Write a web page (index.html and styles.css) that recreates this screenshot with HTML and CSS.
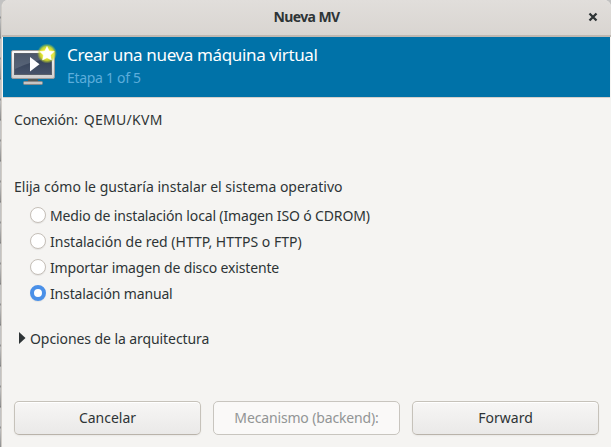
FILE: index.html
```html
<!DOCTYPE html>
<html lang="es">
<head>
<meta charset="utf-8">
<title>Nueva MV</title>
<link rel="stylesheet" href="styles.css">
</head>
<body>
<main class="window">
  <header class="titlebar">
    <h1>Nueva MV</h1>
    <button class="close" aria-label="Cerrar"><svg width="10" height="10" viewBox="0 0 10 10"><path d="M1.5 1.5 8.500 8.500M8.500 1.5 1.5 8.500" stroke="#2e3436" stroke-width="2.3"/></svg></button>
  </header>
  <section class="banner">
    <svg class="monitor" width="48" height="48" viewBox="0 0 48 48">
      <defs>
        <linearGradient id="screen" x2="0" y2="1"><stop stop-color="#2f3b50"/><stop offset="1" stop-color="#46536a"/></linearGradient>
        <linearGradient id="frame" x2="0" y2="1"><stop stop-color="#fafafa"/><stop offset="1" stop-color="#cfcfcf"/></linearGradient>
        <radialGradient id="glow"><stop offset=".4" stop-color="#f6f32a"/><stop offset=".7" stop-color="#dce22a" stop-opacity=".85"/><stop offset="1" stop-color="#b6d52a" stop-opacity="0"/></radialGradient>
      </defs>
      <path d="M19 37h10v5H19z" fill="#555957"/>
      <rect x="14.500" y="40.500" width="19" height="3" rx="1" fill="#c5c5c5" stroke="#888"/>
      <rect x="2.500" y="9.500" width="43" height="28" rx="1.500" fill="url(#frame)" stroke="#989a9b"/>
      <rect x="5.500" y="12.500" width="37" height="21" fill="url(#screen)" stroke="#59606a"/>
      <path d="M6 13h36v4Q22 20 6 28z" fill="#a4afbd" opacity=".25"/>
      <path d="M21 16v14.500L30.500 23.200z" fill="#fff"/>
      <circle cx="38" cy="12.500" r="10" fill="url(#glow)"/>
      <path d="m38 5.500 2.200 4.400 4.900.7-3.500 3.500.8 4.900-4.400-2.300-4.400 2.300.8-4.900-3.500-3.500 4.900-.7z" fill="#fff" stroke="#fff" stroke-width=".5" stroke-linejoin="round"/>
    </svg>
    <div class="heading">
      <h2>Crear una nueva máquina virtual</h2>
      <p>Etapa 1 of 5</p>
    </div>
  </section>
  <section class="content">
    <p class="connection"><span class="conn-label">Conexión:</span><span class="conn-value">QEMU/KVM</span></p>
    <p class="question">Elija cómo le gustaría instalar el sistema operativo</p>
    <div class="options">
      <label class="opt-local"><i class="radio"></i>Medio de instalación local (Imagen ISO ó CDROM)</label>
      <label class="opt-net"><i class="radio"></i>Instalación de red (HTTP, HTTPS o FTP)</label>
      <label class="opt-import"><i class="radio"></i>Importar imagen de disco existente</label>
      <label class="opt-manual"><i class="radio checked"></i>Instalación manual</label>
    </div>
    <p class="expander"><svg width="7" height="12" viewBox="0 0 7 12"><path d="M0 0 6.500 6 0 12z" fill="#2e3436"/></svg><span>Opciones de la arquitectura</span></p>
  </section>
  <footer class="actions">
    <button class="button"><span class="b-cancel">Cancelar</span></button>
    <button class="button" disabled><span class="b-back">Mecanismo (backend):</span></button>
    <button class="button"><span class="b-forward">Forward</span></button>
  </footer>
</main>
</body>
</html>
```
FILE: styles.css
```css
* { box-sizing: border-box; }
body {
  margin: 0;
  height: 447px;
  padding-left: 1px;
  overflow: hidden;
  background: repeating-linear-gradient(#c2c2c2 0 16px, #929292 17px 18px, #bfbfbf 19px, #909090 37px, #777 38px, #c4c4c4 39px 41px);
  font-family: "Noto Sans", sans-serif;
  font-size: 14px;
  color: #2e3436;
}
h1, h2, p { margin: 0; font-weight: 400; white-space: nowrap; }
.window {
  height: 447px;
  display: flex;
  flex-direction: column;
  background: #f5f4f2;
  border-left: 1px solid #d0ccc7;
  border-radius: 7px 7px 0 0;
  overflow: hidden;
}
.titlebar {
  height: 37px;
  flex: none;
  display: grid;
  grid-template-columns: 1fr auto 1fr;
  align-items: center;
  background: linear-gradient(#e1dedb, #d9d5d1);
  border-bottom: 2px solid #bfb8b1;
  padding-bottom: 1px;
}
.titlebar h1 { grid-column: 2; font-size: 14px; font-weight: 700; line-height: 20px; letter-spacing: -.6px; }
.close { justify-self: end; margin-right: 13px; width: 10px; height: 10px; padding: 0; border: 0; background: none; display: flex; }
.banner {
  height: 61px;
  flex: none;
  display: flex;
  margin: 0 1px;
  padding: 4px 0 0 6px;
  background: #0072a8;
  border-bottom: 1px solid #d5d0cc;
}
.monitor { flex: none; }
.heading { margin-left: 10px; padding-top: 2px; }
.heading h2 { color: #fff; font-size: 17px; line-height: 24px; letter-spacing: -.36px; }
.heading p { color: #5caddb; line-height: 21px; letter-spacing: -.3px; }
.content { flex: 1; padding: 12px 12px 0; }
.connection { height: 20px; line-height: 20px; display: flex; gap: 6px; }
.conn-label { letter-spacing: -.2px; }
.conn-value { letter-spacing: .3px; }
.question { margin-top: 47px; line-height: 20px; letter-spacing: 0; }
.options { margin: 5px 0 0 16px; }
.options label { display: flex; align-items: center; gap: 4px; height: 26px; white-space: nowrap; letter-spacing: -.15px; }
.options .opt-net { letter-spacing: 0; }
.radio { width: 16px; height: 16px; flex: none; border: 1px solid #c5bfb8; border-radius: 50%; background: #fff; box-shadow: 0 1px 1px #0001; }
.radio.checked { border: 4px solid #4a90e8; }
.expander { display: flex; align-items: center; gap: 4px; margin: 22px 0 0 5px; height: 20px; letter-spacing: -.08px; }
.actions { display: grid; grid-template-columns: repeat(3, 187px); gap: 12px; padding: 0 0 12px 12px; flex: none; }
.button {
  height: 34px;
  padding: 0 0 2px;
  border: 1px solid #c6c2ba;
  border-bottom-color: #b9b3aa;
  border-radius: 5px;
  background: linear-gradient(#f7f6f5, #eae9e8);
  box-shadow: inset 0 1px #fff, 0 1px 2px #0000000d;
  color: #2e3436;
  font: inherit;
  letter-spacing: 0;
}
.button:disabled { background: #faf9f8; color: #929595; box-shadow: none; border-color: #c8c5bf; letter-spacing: -.15px; }
```
